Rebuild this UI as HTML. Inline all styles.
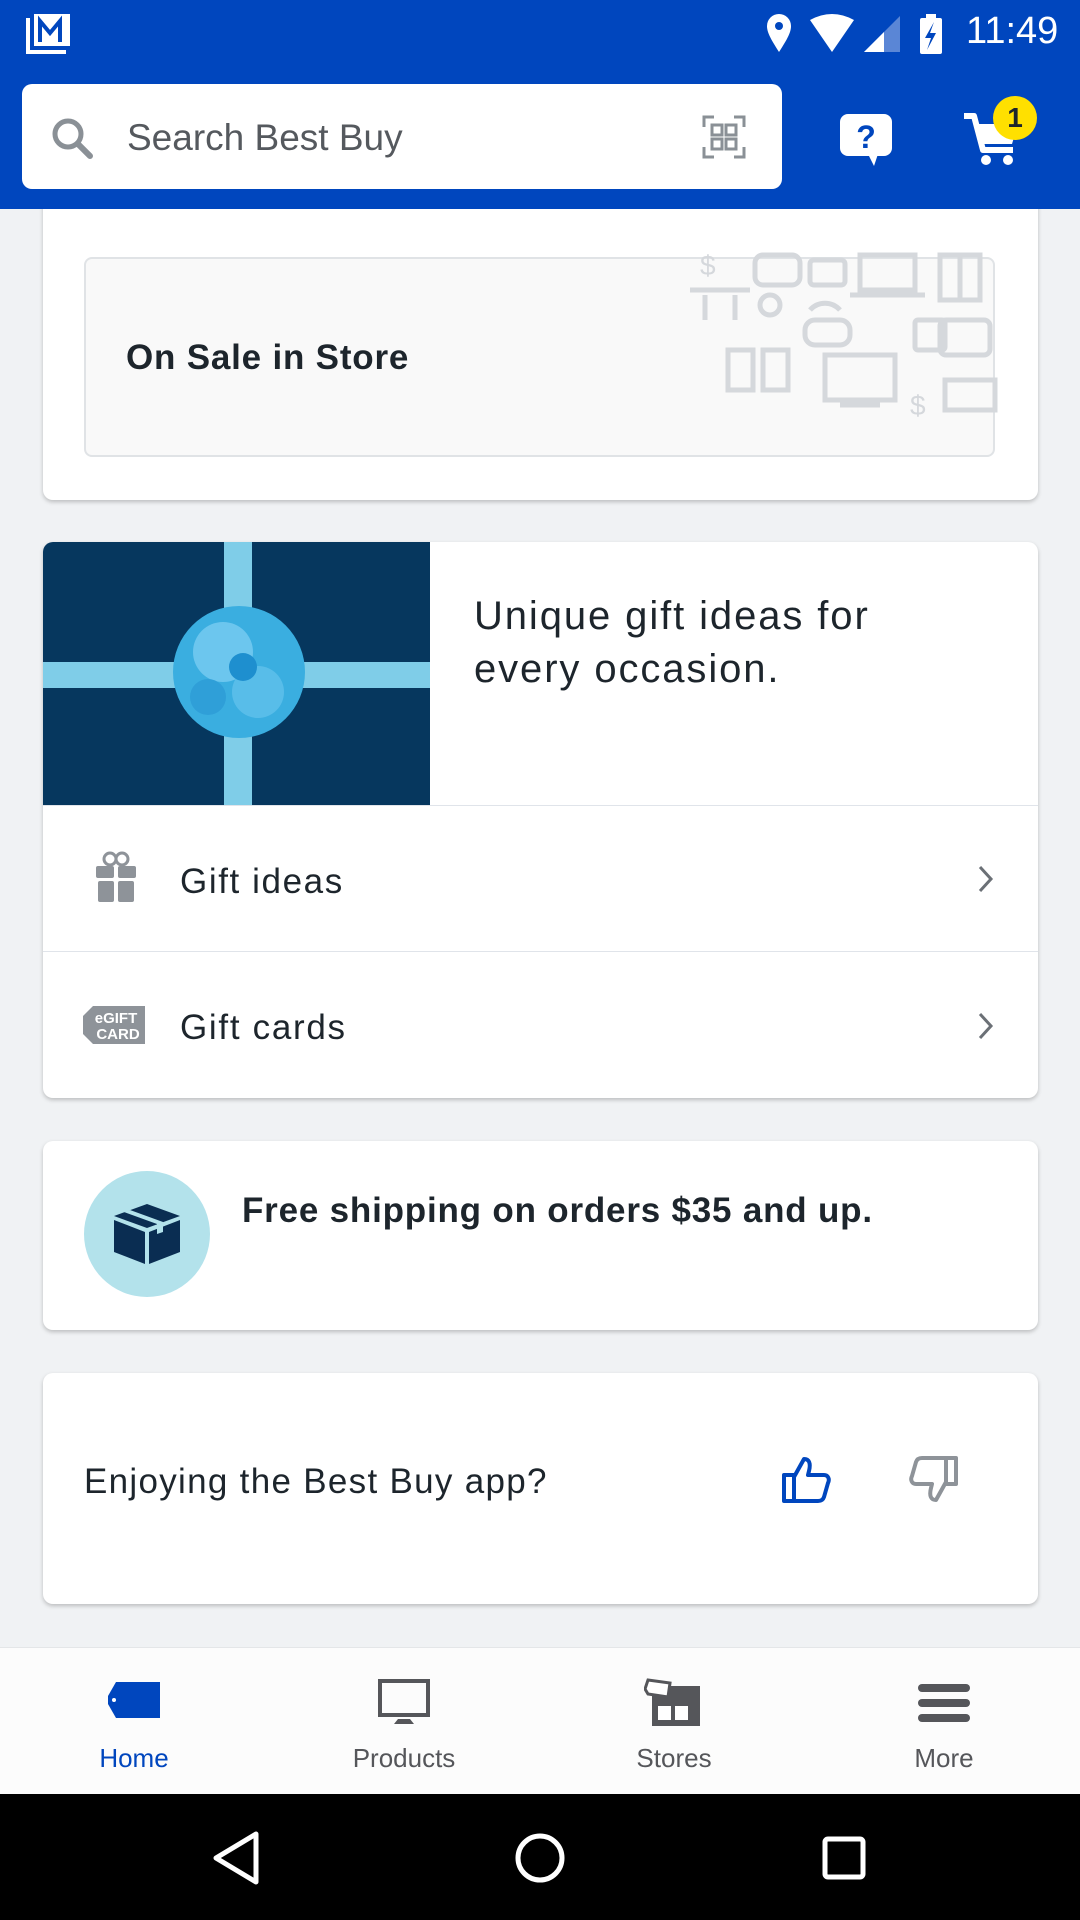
<!DOCTYPE html>
<html><head><meta charset="utf-8"><style>
*{margin:0;padding:0;box-sizing:border-box}
body{width:1080px;height:1920px;background:#f0f2f4;font-family:"Liberation Sans",sans-serif;position:relative;overflow:hidden;color:#1d252c}
.abs{position:absolute}
.card{position:absolute;left:43px;width:995px;background:#fff;border-radius:10px;box-shadow:0 2px 4px rgba(0,0,0,.22)}
.t{position:absolute;white-space:nowrap}
</style></head><body>
<div class="card" style="top:140px;height:360px"></div>
<div class="abs" style="left:84px;top:257px;width:911px;height:200px;border:2px solid #e0e3e6;border-radius:8px;background:#f9f9f9"></div>
<svg class="abs" style="left:670px;top:250px" width="330" height="170" viewBox="0 0 330 170" fill="none" stroke="#d5d8dc" stroke-width="5">
<rect x="85" y="5" width="45" height="30" rx="8"/><rect x="140" y="10" width="35" height="25" rx="4"/><rect x="190" y="5" width="55" height="35"/><path d="M180 45h75"/><rect x="270" y="5" width="20" height="45"/><rect x="290" y="5" width="20" height="45"/>
<path d="M20 40h60M35 45v25M65 45v25"/><circle cx="100" cy="55" r="10"/><path d="M140 60a20 20 0 0 1 30 0"/><rect x="135" y="70" width="45" height="25" rx="10"/><rect x="245" y="70" width="30" height="30" rx="3"/><rect x="270" y="70" width="50" height="35" rx="6"/>
<rect x="58" y="100" width="25" height="40"/><rect x="93" y="100" width="25" height="40"/><rect x="155" y="105" width="70" height="45"/><path d="M170 155h40"/><rect x="275" y="130" width="50" height="30"/><text x="240" y="165" font-size="28" fill="#d5d8dc" stroke="none" font-family="Liberation Sans">$</text><text x="30" y="25" font-size="28" fill="#d5d8dc" stroke="none" font-family="Liberation Sans">$</text>
</svg>
<div class="t" style="left:126px;top:338px;font-size:35px;font-weight:bold;letter-spacing:0.8px">On Sale in Store</div>

<div class="abs" style="left:0;top:0;width:1080px;height:209px;background:#0046be"></div>
<svg class="abs" style="left:24px;top:12px" width="48" height="42" viewBox="0 0 48 42"><path d="M4 6v34h38" stroke="#fff" stroke-width="4" fill="none"/><rect x="10" y="2" width="36" height="32" fill="#fff"/><path d="M16 30V9l10 12 10-12v21" stroke="#0046be" stroke-width="4" fill="none"/></svg>
<svg class="abs" style="left:762px;top:12px" width="200" height="42" viewBox="0 0 200 42" fill="#fff"><path d="M17 40C8 26 5 20 5 14a12 12 0 0 1 24 0c0 6-3 12-12 26z"/><circle cx="17" cy="14" r="4" fill="#0046be"/><path d="M48 8q22-12 44 0L70 40z"/><path d="M102 40L138 4v36z" fill="#5a86d6"/><path d="M102 40L122 20v20z"/><rect x="158" y="6" width="22" height="36" rx="2"/><rect x="164" y="2" width="10" height="5"/><path d="M172 10l-9 16h6l-4 12 9-17h-6z" fill="#0046be"/></svg>
<div class="t" style="left:966px;top:10px;font-size:38px;color:#fff">11:49</div>

<div class="abs" style="left:22px;top:84px;width:760px;height:105px;background:#fff;border-radius:10px"></div>
<svg class="abs" style="left:50px;top:116px" width="46" height="46" viewBox="0 0 46 46"><circle cx="18" cy="18" r="13" stroke="#8a9096" stroke-width="5" fill="none"/><path d="M28 28l12 12" stroke="#8a9096" stroke-width="6" stroke-linecap="round"/></svg>
<div class="t" style="left:127px;top:117px;font-size:37px;color:#55595e">Search Best Buy</div>
<svg class="abs" style="left:702px;top:115px" width="44" height="44" viewBox="0 0 44 44" fill="none" stroke="#8a9096" stroke-width="3"><path d="M2 12V2h10M32 2h10v10M42 32v10H32M12 42H2V32"/><rect x="10" y="10" width="10" height="10"/><rect x="24" y="10" width="10" height="10"/><rect x="10" y="24" width="10" height="10"/><rect x="24" y="24" width="10" height="10"/></svg>
<svg class="abs" style="left:838px;top:112px" width="56" height="56" viewBox="0 0 56 56"><rect x="2" y="2" width="52" height="42" rx="8" fill="#fff"/><path d="M30 42l6 12 4-12z" fill="#fff"/><text x="28" y="36" text-anchor="middle" font-size="32" font-weight="bold" fill="#0046be" font-family="Liberation Sans">?</text></svg>
<svg class="abs" style="left:962px;top:110px" width="60" height="58" viewBox="0 0 60 58" fill="#fff"><path d="M2 6h10l9 34h30" stroke="#fff" stroke-width="6" fill="none" stroke-linejoin="round"/><path d="M14 14h42l-6 20H20z"/><circle cx="24" cy="50" r="5"/><circle cx="46" cy="50" r="5"/></svg>
<div class="abs" style="left:993px;top:96px;width:44px;height:44px;border-radius:50%;background:#ffe000;text-align:center;line-height:44px;font-size:28px;font-weight:bold;color:#1d252c">1</div>

<div class="card" style="top:542px;height:556px;overflow:hidden">
<svg class="abs" style="left:0;top:0" width="387" height="263" viewBox="0 0 387 263"><rect width="387" height="263" fill="#06375e"/><rect x="181" width="28" height="263" fill="#7fcde8"/><rect y="120" width="387" height="26" fill="#7fcde8"/><circle cx="196" cy="130" r="66" fill="#3aaee0"/><circle cx="180" cy="110" r="30" fill="#6cc6ee"/><circle cx="215" cy="150" r="26" fill="#58bde9"/><circle cx="200" cy="125" r="14" fill="#1e8fcf"/><circle cx="165" cy="155" r="18" fill="#2f9fd8"/></svg>
<div class="abs" style="left:0;top:263px;width:995px;height:1px;background:#e0e4ea"></div>
<div class="abs" style="left:0;top:409px;width:995px;height:1px;background:#e0e4ea"></div>
</div>
<div class="t" style="left:474px;top:590px;font-size:40px;line-height:53px;letter-spacing:1.9px">Unique gift ideas for<br>every occasion.</div>
<svg class="abs" style="left:96px;top:851px" width="40" height="52" viewBox="0 0 40 52" fill="#8e9399"><circle cx="14" cy="8" r="6" fill="none" stroke="#8e9399" stroke-width="3"/><circle cx="26" cy="8" r="6" fill="none" stroke="#8e9399" stroke-width="3"/><rect x="0" y="15" width="18" height="12" rx="2"/><rect x="22" y="15" width="18" height="12" rx="2"/><rect x="2" y="30" width="16" height="21" rx="2"/><rect x="22" y="30" width="16" height="21" rx="2"/></svg>
<div class="t" style="left:180px;top:862px;font-size:35px;letter-spacing:1.6px">Gift ideas</div>
<svg class="abs" style="left:83px;top:1006px" width="62" height="38" viewBox="0 0 62 38"><path d="M10 0h52v38H10L0 28V10z" fill="#8e9399"/><text x="33" y="17" text-anchor="middle" font-size="15" font-weight="bold" fill="#fff" font-family="Liberation Sans">eGIFT</text><text x="35" y="33" text-anchor="middle" font-size="15" font-weight="bold" fill="#fff" font-family="Liberation Sans">CARD</text></svg>
<div class="t" style="left:180px;top:1008px;font-size:35px;letter-spacing:1.7px">Gift cards</div>
<svg class="abs" style="left:978px;top:865px" width="16" height="28" viewBox="0 0 16 28"><path d="M2 2l11 12L2 26" stroke="#6b7076" stroke-width="3" fill="none"/></svg>
<svg class="abs" style="left:978px;top:1012px" width="16" height="28" viewBox="0 0 16 28"><path d="M2 2l11 12L2 26" stroke="#6b7076" stroke-width="3" fill="none"/></svg>

<div class="card" style="top:1141px;height:189px"></div>
<div class="abs" style="left:84px;top:1171px;width:126px;height:126px;border-radius:50%;background:#b3e2eb"></div>
<svg class="abs" style="left:112px;top:1202px" width="70" height="64" viewBox="0 0 70 64" fill="#0a2d52"><path d="M35 2l33 12-33 12L2 14z"/><path d="M2 18l31 12v32L2 50z"/><path d="M68 18L37 30v32l31-12z"/><path d="M18 8l33 12v10l-6 2V22L12 10z" fill="#b3e2eb"/></svg>
<div class="t" style="left:242px;top:1191px;font-size:35px;font-weight:bold;letter-spacing:0.8px">Free shipping on orders $35 and up.</div>

<div class="card" style="top:1373px;height:231px"></div>
<div class="t" style="left:84px;top:1462px;font-size:35px;letter-spacing:1.3px">Enjoying the Best Buy app?</div>
<svg class="abs" style="left:782px;top:1455px" width="50" height="48" viewBox="0 0 50 48" fill="none" stroke="#0046be" stroke-width="4" stroke-linejoin="round"><rect x="2" y="20" width="10" height="26"/><path d="M12 22l10-18c5 0 7 4 5 12l-1 4h16c4 0 6 4 4 8l-4 14c-1 3-3 4-6 4H12"/></svg>
<svg class="abs" style="left:908px;top:1456px" width="50" height="48" viewBox="0 0 50 48" fill="none" stroke="#8e9399" stroke-width="4" stroke-linejoin="round"><rect x="38" y="2" width="10" height="26"/><path d="M38 26L28 44c-5 0-7-4-5-12l1-4H8c-4 0-6-4-4-8L8 6c1-3 3-4 6-4h24"/></svg>

<div class="abs" style="left:0;top:1647px;width:1080px;height:147px;background:#fcfcfc;border-top:1px solid #e4e6e8"></div>
<svg class="abs" style="left:106px;top:1682px" width="54" height="36" viewBox="0 0 54 36"><path d="M10 0h44v36H10L2 22v-8z" fill="#0046be"/><circle cx="8" cy="18" r="2" fill="#fff"/></svg>
<svg class="abs" style="left:378px;top:1679px" width="52" height="46" viewBox="0 0 52 46"><rect x="2" y="2" width="48" height="34" fill="none" stroke="#55565a" stroke-width="4"/><path d="M20 40h12l4 5H16z" fill="#55565a"/></svg>
<svg class="abs" style="left:644px;top:1678px" width="58" height="48" viewBox="0 0 58 48"><rect x="8" y="8" width="48" height="40" fill="#55565a"/><rect x="14" y="28" width="13" height="14" fill="#fff"/><rect x="31" y="28" width="13" height="14" fill="#fff"/><path d="M4 2l22 3-2 14-20-3-3-5z" fill="#fff" stroke="#55565a" stroke-width="3"/></svg>
<svg class="abs" style="left:918px;top:1684px" width="52" height="38" viewBox="0 0 52 38" fill="#55565a"><rect x="0" y="0" width="52" height="8" rx="4"/><rect x="0" y="15" width="52" height="8" rx="4"/><rect x="0" y="30" width="52" height="8" rx="4"/></svg>
<div class="t" style="left:134px;top:1743px;transform:translateX(-50%);font-size:26px;color:#0046be">Home</div>
<div class="t" style="left:404px;top:1743px;transform:translateX(-50%);font-size:26px;color:#55565a">Products</div>
<div class="t" style="left:674px;top:1743px;transform:translateX(-50%);font-size:26px;color:#55565a">Stores</div>
<div class="t" style="left:944px;top:1743px;transform:translateX(-50%);font-size:26px;color:#55565a">More</div>

<div class="abs" style="left:0;top:1794px;width:1080px;height:126px;background:#000"></div>
<svg class="abs" style="left:210px;top:1830px" width="52" height="56" viewBox="0 0 52 56"><path d="M46 4L6 28l40 24z" fill="none" stroke="#fff" stroke-width="5" stroke-linejoin="round"/></svg>
<svg class="abs" style="left:514px;top:1832px" width="52" height="52" viewBox="0 0 52 52"><circle cx="26" cy="26" r="22" fill="none" stroke="#fff" stroke-width="5"/></svg>
<svg class="abs" style="left:822px;top:1836px" width="44" height="44" viewBox="0 0 44 44"><rect x="3" y="3" width="38" height="38" rx="3" fill="none" stroke="#fff" stroke-width="5"/></svg>
</body></html>
